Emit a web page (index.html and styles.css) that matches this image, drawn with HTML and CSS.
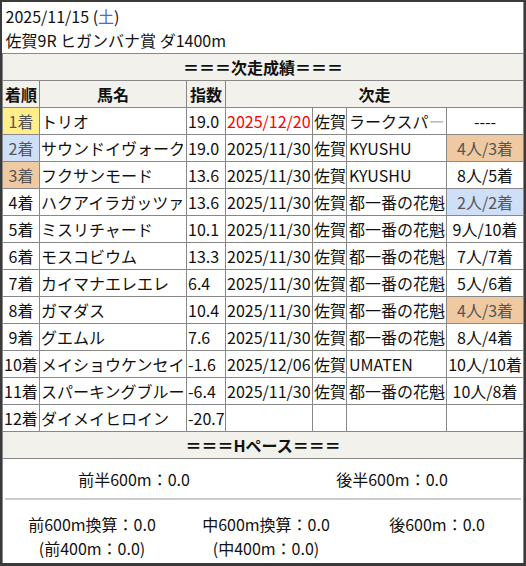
FILE: index.html
```html
<!DOCTYPE html>
<html lang="ja">
<head>
<meta charset="utf-8">
<link rel="stylesheet" href="styles.css">
</head>
<body>
<div class="frame">
<table class="res">
<colgroup>
<col class="c1"><col class="c2"><col class="c3"><col class="c4"><col class="c5"><col class="c6"><col class="c7">
</colgroup>
<tr><td colspan="7" class="title">2025/11/15 (<span class="sat">土</span>)<br>佐賀9R ヒガンバナ賞 ダ1400m</td></tr>
<tr><td colspan="7" class="sec">＝＝＝次走成績＝＝＝</td></tr>
<tr class="hd"><th>着順</th><th>馬名</th><th>指数</th><th colspan="4">次走</th></tr>
<tr><td class="rk y">1着</td><td>トリオ</td><td>19.0</td><td class="red">2025/12/20</td><td>佐賀</td><td class="rn">ラークスパ<span class="fade">ー</span></td><td class="rs">----</td></tr>
<tr><td class="rk b">2着</td><td>サウンドイヴォーク</td><td>19.0</td><td>2025/11/30</td><td>佐賀</td><td class="rn">KYUSHU</td><td class="rs o">4人/3着</td></tr>
<tr><td class="rk o">3着</td><td>フクサンモード</td><td>13.6</td><td>2025/11/30</td><td>佐賀</td><td class="rn">KYUSHU</td><td class="rs">8人/5着</td></tr>
<tr><td class="rk">4着</td><td>ハクアイラガッツァ</td><td>13.6</td><td>2025/11/30</td><td>佐賀</td><td class="rn">都一番の花魁</td><td class="rs b">2人/2着</td></tr>
<tr><td class="rk">5着</td><td>ミスリチャード</td><td>10.1</td><td>2025/11/30</td><td>佐賀</td><td class="rn">都一番の花魁</td><td class="rs">9人/10着</td></tr>
<tr><td class="rk">6着</td><td>モスコビウム</td><td>13.3</td><td>2025/11/30</td><td>佐賀</td><td class="rn">都一番の花魁</td><td class="rs">7人/7着</td></tr>
<tr><td class="rk">7着</td><td>カイマナエレエレ</td><td>6.4</td><td>2025/11/30</td><td>佐賀</td><td class="rn">都一番の花魁</td><td class="rs">5人/6着</td></tr>
<tr><td class="rk">8着</td><td>ガマダス</td><td>10.4</td><td>2025/11/30</td><td>佐賀</td><td class="rn">都一番の花魁</td><td class="rs o">4人/3着</td></tr>
<tr><td class="rk">9着</td><td>グエムル</td><td>7.6</td><td>2025/11/30</td><td>佐賀</td><td class="rn">都一番の花魁</td><td class="rs">8人/4着</td></tr>
<tr><td class="rk">10着</td><td>メイショウケンセイ</td><td>-1.6</td><td>2025/12/06</td><td>佐賀</td><td class="rn">UMATEN</td><td class="rs">10人/10着</td></tr>
<tr><td class="rk">11着</td><td>スパーキングブルー</td><td>-6.4</td><td>2025/11/30</td><td>佐賀</td><td class="rn">都一番の花魁</td><td class="rs">10人/8着</td></tr>
<tr><td class="rk">12着</td><td>ダイメイヒロイン</td><td>-20.7</td><td></td><td></td><td></td><td></td></tr>
<tr><td colspan="7" class="sec">＝＝＝Hペース＝＝＝</td></tr>
<tr><td colspan="7" class="pace">
<div class="half"><div>前半600m：0.0</div><div>後半600m：0.0</div></div>
<div class="third">
<div>前600m換算：0.0<br>(前400m：0.0)</div>
<div>中600m換算：0.0<br>(中400m：0.0)</div>
<div>後600m：0.0</div>
</div>
</td></tr>
</table>
</div>
</body>
</html>
```
FILE: styles.css
```css
html, body {
  margin: 0;
  padding: 0;
  background: #3a3a3a;
}
body {
  font-family: "Noto Sans CJK JP", "Noto Sans", sans-serif;
  font-size: 16px;
  color: #111;
}
.frame {
  margin: 2px 0 0 2px;
  width: 521px;
  height: 561px;
  background: #fff;
}
.res {
  border-collapse: collapse;
  table-layout: fixed;
  width: 521px;
  background: #fff;
}
.c1 { width: 37px; }
.c2 { width: 147px; }
.c3 { width: 39px; }
.c4 { width: 87px; }
.c5 { width: 34px; }
.c6 { width: 100px; }
.c7 { width: 77px; }
.res td, .res th {
  border: 1px solid #888;
  padding: 0 1px;
  height: 26px;
  line-height: 23px;
  white-space: nowrap;
  overflow: hidden;
  text-align: left;
  font-weight: normal;
}
.res .title {
  height: 50px;
  line-height: 24px;
  padding: 1px 3px 0;
  border-top: none;
  border-left: none;
}
.sat { color: #4a6fc0; }
.res .sec {
  background: #f2f1ec;
  text-align: center;
  font-weight: bold;
}
.res .hd th {
  background: #f2f1ec;
  text-align: center;
  font-weight: bold;
}
.res .rk { text-align: center; padding: 0; }
.res .rs { text-align: center; }
.res .rn { padding-left: 2px; }
.red { color: #f00; }
.fade { color: #bbb; }
.res .y { background: #ffee8a; color: #555; }
.res .b { background: #cfdff8; color: #555; }
.res .o { background: #efc9a2; color: #555; }
.res .pace {
  padding: 0;
  height: auto;
  line-height: 24px;
  border-bottom: none;
}
.half {
  display: grid;
  grid-template-columns: 1fr 1fr;
  text-align: center;
  height: 39px;
  align-items: center;
  border-bottom: 2px solid #ccc;
  margin: 0 2px;
}
.third {
  display: grid;
  grid-template-columns: 178px 170px 1fr;
  text-align: center;
  padding-top: 12px;
  height: 51px;
}
```
